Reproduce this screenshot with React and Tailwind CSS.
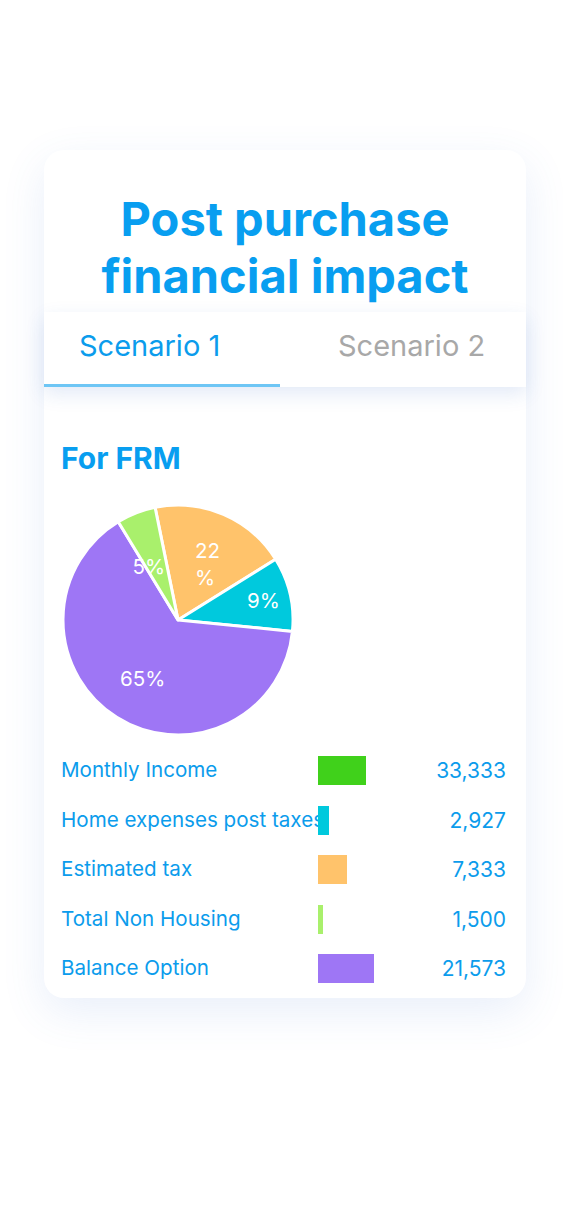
import React from "react";

const slices = [
  { from: -11.5, to: 58.1, color: "#ffc36b" },
  { from: 58.1, to: 95.7, color: "#00c9dd" },
  { from: 95.7, to: 328.7, color: "#9e76f5" },
  { from: 328.7, to: 348.5, color: "#a9f06c" },
];

const rows = [
  { label: "Monthly Income", value: "33,333", color: "bg-[#40d11b]", w: "w-[48px]" },
  { label: "Home expenses post taxes", value: "2,927", color: "bg-[#00c9dd]", w: "w-[11px]" },
  { label: "Estimated tax", value: "7,333", color: "bg-[#ffc36b]", w: "w-[29px]" },
  { label: "Total Non Housing", value: "1,500", color: "bg-[#a9f06c]", w: "w-[5px]" },
  { label: "Balance Option", value: "21,573", color: "bg-[#9e76f5]", w: "w-[56px]" },
];

function point(cx, cy, r, deg) {
  const a = (deg * Math.PI) / 180;
  return [cx + r * Math.sin(a), cy - r * Math.cos(a)];
}

function slicePath(cx, cy, r, from, to) {
  const [x1, y1] = point(cx, cy, r, from);
  const [x2, y2] = point(cx, cy, r, to);
  const large = to - from > 180 ? 1 : 0;
  return `M${cx} ${cy} L${x1} ${y1} A${r} ${r} 0 ${large} 1 ${x2} ${y2} Z`;
}

function Pie() {
  const cx = 117;
  const cy = 120;
  const r = 115;
  return (
    <svg width="240" height="240" viewBox="0 0 240 240" className="block">
      {slices.map((s) => (
        <path key={s.from} d={slicePath(cx, cy, r, s.from, s.to)} fill={s.color} stroke="#ffffff" strokeWidth="3" strokeLinejoin="round" />
      ))}
      <g fill="#ffffff" fontSize="20.5" fontFamily="Inter, sans-serif">
        <text x="134" y="58">22</text>
        <text x="134" y="85">%</text>
        <text x="186" y="107.5">9%</text>
        <text x="71.5" y="74">5%</text>
        <text x="59" y="185.5">65%</text>
      </g>
    </svg>
  );
}

export default function App() {
  return (
    <div className="min-h-[1219px] bg-white px-[44px] pt-[150px] font-['Inter',sans-serif]">
      <div className="w-[482px] rounded-[20px] bg-white shadow-[0_14px_44px_rgba(70,120,210,0.12)]">
        {/* Title */}
        <div className="h-[162px] pt-[40px] text-center">
          <h1 className="text-[47px] font-bold leading-[57px] text-[#089ef0]">
            Post purchase
            <br />
            financial impact
          </h1>
        </div>

        {/* Tabs */}
        <div className="relative z-10 flex h-[75px] bg-white shadow-[0_7px_18px_rgba(40,90,190,0.13)]">
          <div className="flex w-[236px] items-center border-b-[3px] border-[#6ec6f5] pb-[5px] pl-[35px] text-[29px] text-[#0b9cec]">
            Scenario 1
          </div>
          <div className="flex flex-1 items-center pb-[8px] pl-[58px] text-[29px] text-[#a8a8a8]">
            Scenario 2
          </div>
        </div>

        {/* Chart + legend */}
        <div className="px-[17px] pb-[4px] pt-[53px]">
          <h2 className="text-[30px] font-bold leading-[36px] text-[#089ef0]">For FRM</h2>
          <div className="mt-[24px]">
            <Pie />
          </div>
          <div className="mt-[6px]">
            {rows.map((row) => (
              <div key={row.label} className="flex h-[49.5px] items-center">
                <div className="w-[257px] overflow-hidden whitespace-nowrap text-[20.6px] text-[#0b9cec]">
                  {row.label}
                </div>
                <div className={`h-[29px] ${row.w} ${row.color}`}></div>
                <div className="flex-1 pr-[3px] text-right text-[21px] text-[#0b9cec]">{row.value}</div>
              </div>
            ))}
          </div>
        </div>
      </div>
    </div>
  );
}
